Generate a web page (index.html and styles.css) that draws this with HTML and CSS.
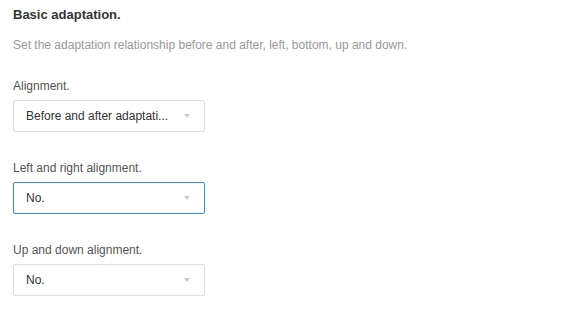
FILE: index.html
```html
<!DOCTYPE html>
<html lang="en">
<head>
  <meta charset="UTF-8" />
  <meta name="viewport" content="width=device-width, initial-scale=1.0" />
  <title>Basic adaptation</title>
  <link rel="stylesheet" href="styles.css">
</head>
<body>
  <div class="panel">
    <h2 class="panel-title">Basic adaptation.</h2>
    <p class="panel-desc">Set the adaptation relationship before and after, left, bottom, up and down.</p>

    <div class="field">
      <div class="field-label">Alignment.</div>
      <div class="select">
        <span class="select-value">Before and after adaptati...</span>
        <span class="select-arrow"></span>
      </div>
    </div>

    <div class="field">
      <div class="field-label">Left and right alignment.</div>
      <div class="select focus">
        <span class="select-value">No.</span>
        <span class="select-arrow"></span>
      </div>
    </div>

    <div class="field">
      <div class="field-label">Up and down alignment.</div>
      <div class="select">
        <span class="select-value">No.</span>
        <span class="select-arrow"></span>
      </div>
    </div>
  </div>
</body>
</html>
```

FILE: styles.css
```css
body {
  margin: 0;
  font-family: 'Liberation Sans', Arial, sans-serif;
  background: #ffffff;
  color: #333333;
}

.panel {
  padding: 5px 13px;
}

.panel-title {
  margin: 0;
  font-size: 13px;
  line-height: 20px;
  font-weight: bold;
  color: #333333;
}

.panel-desc {
  margin: 10px 0 21px;
  font-size: 12px;
  line-height: 20px;
  color: #999999;
}

.field {
  margin-bottom: 26px;
}

.field-label {
  font-size: 12px;
  line-height: 20px;
  color: #555555;
  margin-bottom: 4px;
}

.select {
  width: 192px;
  height: 32px;
  box-sizing: border-box;
  border: 1px solid #dcdee2;
  border-radius: 2px;
  display: flex;
  align-items: center;
  justify-content: space-between;
  padding: 0 14px 0 12px;
}

.select.focus {
  border-color: #2d8cf0;
}

.select-value {
  font-size: 12px;
  color: #333333;
}

.select-arrow {
  width: 0;
  height: 0;
  border-left: 3.5px solid transparent;
  border-right: 3.5px solid transparent;
  border-top: 4px solid #c5c8ce;
}
```
